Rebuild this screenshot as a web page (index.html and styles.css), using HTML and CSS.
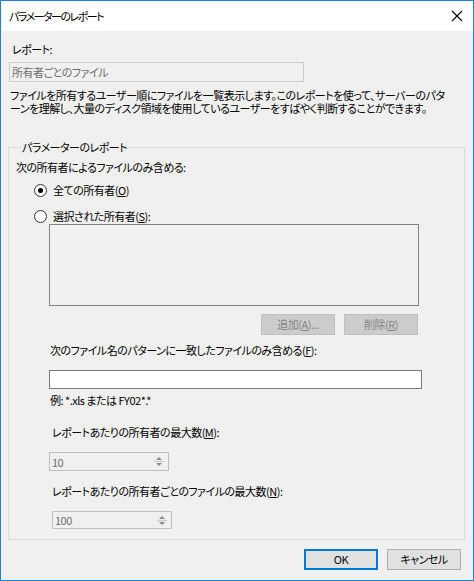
FILE: index.html
```html
<!DOCTYPE html>
<html lang="ja">
<head>
  <meta charset="UTF-8">
  <title>パラメーターのレポート</title>
  <link rel="stylesheet" href="styles.css">
</head>
<body>

<div class="window">
  <div class="titlebar">
    <span class="title">パラメーターのレポート</span>
    <svg class="close" width="12" height="12" viewBox="0 0 12 12">
      <path d="M1 1 L11 11 M11 1 L1 11" stroke="#000" stroke-width="1.1" fill="none"/>
    </svg>
  </div>

  <div class="content">
    <div class="lbl-report">レポート:</div>
    <div class="report-box">所有者ごとのファイル</div>
    <div class="desc">ファイルを所有するユーザー順にファイルを一覧表示します。このレポートを使って、サーバーのパタ<br>ーンを理解し、大量のディスク領域を使用しているユーザーをすばやく判断することができます。</div>

    <fieldset class="group">
      <legend>パラメーターのレポート</legend>
      <div class="row">次の所有者によるファイルのみ含める:</div>

      <div class="radio-row first">
        <span class="radio checked"></span>
        <span>全ての所有者(<u>O</u>)</span>
      </div>
      <div class="radio-row second">
        <span class="radio"></span>
        <span>選択された所有者(<u>S</u>):</span>
      </div>

      <div class="listbox"></div>
      <div class="list-buttons">
        <button class="btn disabled">追加(<u>A</u>)...</button>
        <button class="btn disabled">削除(<u>R</u>)</button>
      </div>

      <div class="row indent lbl-pattern">次のファイル名のパターンに一致したファイルのみ含める(<u>F</u>):</div>
      <div class="pattern-input"></div>
      <div class="row indent example">例: *.xls または FY02*.*</div>

      <div class="row indent2 lbl-max">レポートあたりの所有者の最大数(<u>M</u>):</div>
      <div class="spin">
        <span class="spin-val">10</span>
        <svg class="spin-btn" width="16" height="17" viewBox="0 0 16 17">
          <path d="M5 7 L8 4 L11 7 Z" fill="#8a8a8a"/>
          <path d="M3 8.5 H13" stroke="#c8c8c8" stroke-width="1"/>
          <path d="M5 10 L8 13 L11 10 Z" fill="#8a8a8a"/>
        </svg>
      </div>

      <div class="row indent2 lbl-max2">レポートあたりの所有者ごとのファイルの最大数(<u>N</u>):</div>
      <div class="spin spin2">
        <span class="spin-val">100</span>
        <svg class="spin-btn" width="16" height="16" viewBox="0 0 16 16">
          <path d="M5 7 L8 4 L11 7 Z" fill="#8a8a8a"/>
          <path d="M3 8.5 H13" stroke="#c8c8c8" stroke-width="1"/>
          <path d="M5 10 L8 13 L11 10 Z" fill="#8a8a8a"/>
        </svg>
      </div>
    </fieldset>

    <div class="footer">
      <button class="btn default">OK</button>
      <button class="btn">キャンセル</button>
    </div>
  </div>
</div>

</body>
</html>
```

FILE: styles.css
```css
* { box-sizing: border-box; }
body { margin: 0; font-family: "Noto Sans CJK JP", "Noto Sans", sans-serif; font-size: 11px; letter-spacing: -0.5px; font-feature-settings: "palt"; color: #000; background: #fff; }
u { text-decoration: underline; text-underline-offset: 1px; }

.window { width: 474px; height: 581px; border: 1px solid #1883d7; background: #f0f0f0; display: flex; flex-direction: column; }
.titlebar { height: 30px; background: #fff; display: flex; align-items: center; justify-content: space-between; padding: 0 10px 0 8px; }
.title { font-size: 11px; line-height: 16px; letter-spacing: -1.5px; }
.close { margin-top: -1px; }

.content { padding: 0 7px; display: flex; flex-direction: column; }
.lbl-report { margin: 10px 0 0 4px; line-height: 16px; }
.report-box { margin: 5px 0 0 1px; width: 295px; height: 20px; border: 1px solid #cccccc; color: #6d6d6d; line-height: 18px; padding-left: 2px; }
.desc { margin: 7px 0 0 2px; line-height: 13px; white-space: nowrap; }

.group { margin: 24px 0 0 0; width: 457px; border: 1px solid #dcdcdc; padding: 0 6px 10px 7px; min-width: 0; }
.group legend { padding: 0 1px; line-height: 16px; margin-left: 5px; }
.row { line-height: 16px; white-space: nowrap; }
.group > .row:first-of-type { margin-top: 4px; }

.radio-row { display: flex; align-items: center; height: 16px; gap: 6px; padding-left: 18px; }
.radio-row.first { margin-top: 7px; }
.radio-row.second { margin-top: 10px; }
.radio { width: 13px; height: 13px; border: 1px solid #333; border-radius: 50%; background: #fff; position: relative; flex: none; }
.radio.checked::after { content: ""; position: absolute; left: 3px; top: 3px; width: 5px; height: 5px; border-radius: 50%; background: #000; }

.listbox { margin: 0 0 0 33px; width: 370px; height: 82px; border: 1px solid #828282; }
.list-buttons { display: flex; justify-content: flex-end; gap: 9px; width: 402px; margin-top: 8px; }

.btn { width: 74px; height: 21px; font: inherit; letter-spacing: inherit; line-height: 15px; background: #e1e1e1; border: 1px solid #adadad; padding: 0; color: #000; }
.btn.disabled { background: #cccccc; border-color: #bfbfbf; color: #838383; }
.btn.default { border: 2px solid #0078d7; }

.indent { padding-left: 34px; }
.indent2 { padding-left: 36px; }
.lbl-pattern { margin-top: 7px; }
.pattern-input { margin: 12px 0 0 33px; width: 373px; height: 19px; border: 1px solid #7a7a7a; background: #fff; }
.example { margin-top: 3px; }
.lbl-max { margin-top: 16px; }
.lbl-max2 { margin-top: 12px; }

.spin { margin: 12px 0 0 33px; width: 120px; height: 19px; border: 1px solid #bfbfbf; display: flex; align-items: center; justify-content: space-between; color: #6d6d6d; }
.spin2 { margin-left: 36px; height: 18px; }
.spin-val { padding-left: 2px; line-height: 16px; }
.spin-btn { margin-right: 1px; }

.footer { display: flex; justify-content: flex-end; gap: 9px; margin-top: 9px; padding-right: 5px; }
```
